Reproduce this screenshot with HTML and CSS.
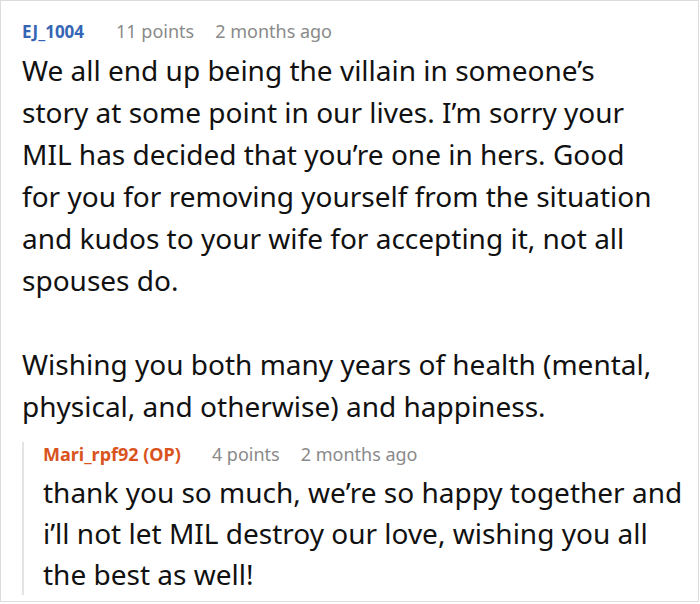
FILE: index.html
```html
<!DOCTYPE html>
<html>
<head>
<meta charset="utf-8">
<link rel="stylesheet" href="styles.css">
</head>
<body>
<div class="comment">
  <div class="meta">
    <span class="author author-blue">EJ_1004</span>
    <span class="points">11 points</span>
    <span class="time">2 months ago</span>
  </div>
  <div class="text">
    <p>We all end up being the villain in someone’s<br>story at some point in our lives. I’m sorry your<br>MIL has decided that you’re one in hers. Good<br>for you for removing yourself from the situation<br>and kudos to your wife for accepting it, not all<br>spouses do.</p>
    <p>Wishing you both many years of health (mental,<br>physical, and otherwise) and happiness.</p>
  </div>
  <div class="reply">
    <div class="meta">
      <span class="author author-op">Mari_rpf92 (OP)</span>
      <span class="points">4 points</span>
      <span class="time">2 months ago</span>
    </div>
    <div class="text">
      <p>thank you so much, we’re so happy together and<br>i’ll not let MIL destroy our love, wishing you all<br>the best as well!</p>
    </div>
  </div>
</div>
</body>
</html>
```
FILE: styles.css
```css
html, body {
  margin: 0;
  padding: 0;
  background: #fff;
}
body {
  font-family: "Noto Sans", "Open Sans", sans-serif;
  color: #111;
}
.comment {
  box-sizing: border-box;
  width: 699px;
  height: 602px;
  border: 1px solid #dcdcdc;
  padding: 18px 4px 0 21px;
  overflow: hidden;
}
.meta {
  font-size: 18px;
  line-height: 24px;
  display: flex;
  align-items: baseline;
  white-space: nowrap;
}
.author {
  font-weight: 700;
  margin-right: 31px;
}
.author-blue {
  color: #3565b5;
  font-size: 17px;
  margin-right: 32px;
}
.author-op { color: #d9531e; }
.points {
  color: #8a8a8a;
  margin-right: 21px;
}
.time { color: #8a8a8a; }
.text {
  margin-top: 5px;
  font-size: 28px;
  line-height: 42px;
  white-space: nowrap;
}
.text p {
  margin: 0 0 42px 0;
}
.text p:last-child {
  margin-bottom: 0;
}
.reply {
  margin-top: 15px;
  border-left: 2px solid #e4e4e4;
  padding-left: 19px;
}
.reply .text {
  margin-top: 6px;
  line-height: 41px;
}
```
